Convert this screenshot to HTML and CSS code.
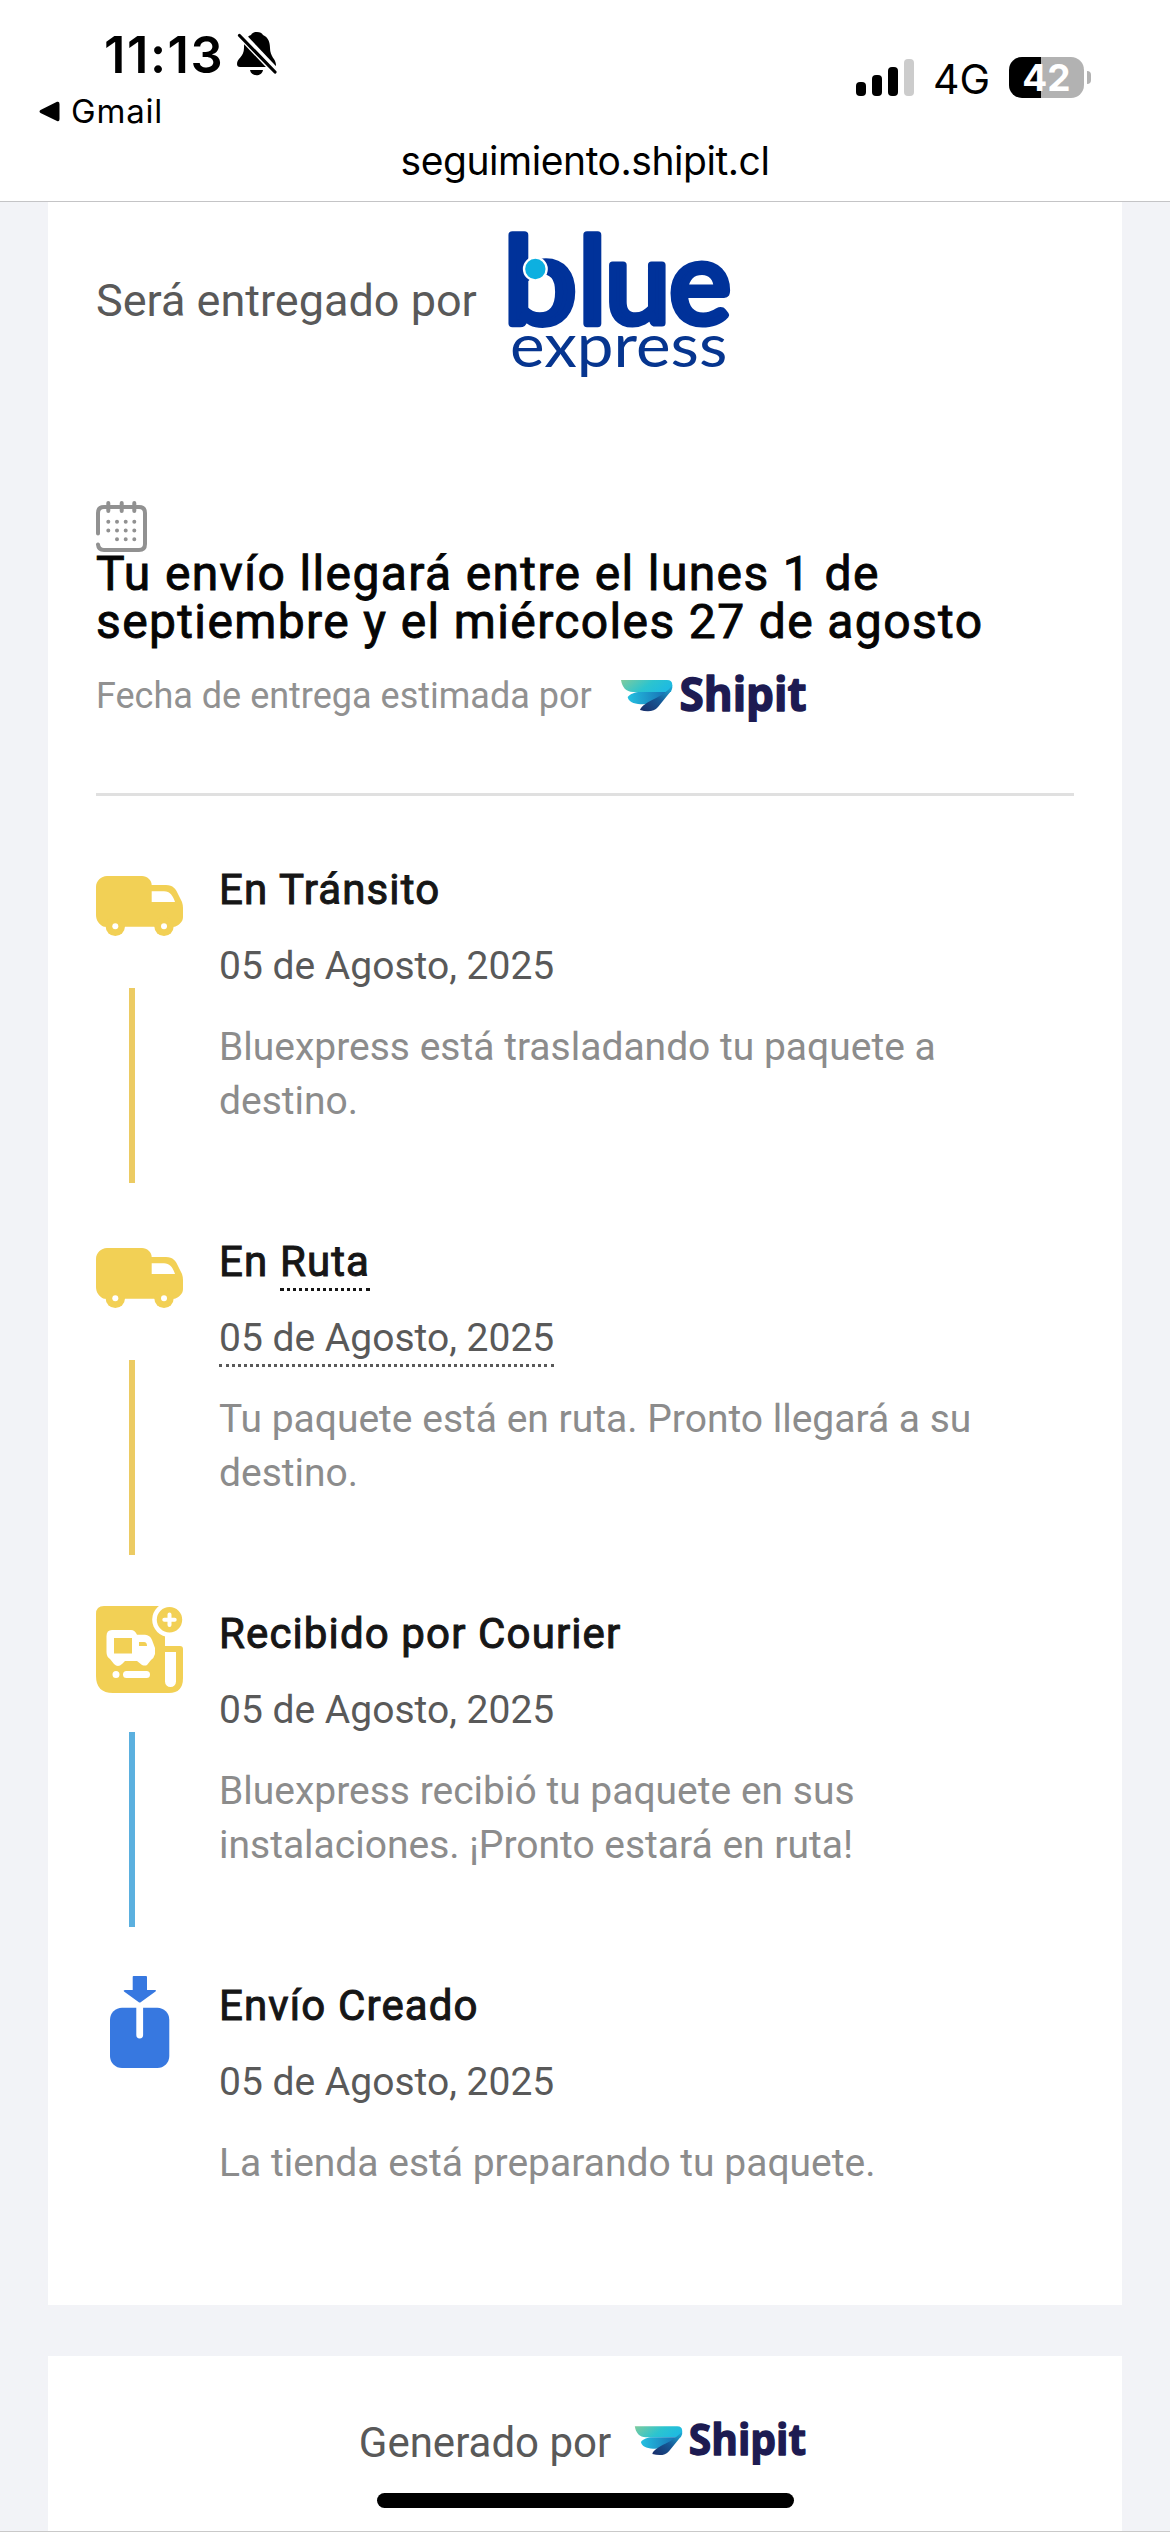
FILE: index.html
```html
<!DOCTYPE html>
<html lang="es">
<head>
<meta charset="utf-8">
<title>Seguimiento Shipit</title>
<link rel="stylesheet" href="styles.css">
</head>
<body>
<svg class="defs" aria-hidden="true">
  <defs>
    <linearGradient id="wingTop" x1="0" x2="1" y1="0" y2=".3"><stop offset="0" stop-color="#7fcb9d"/><stop offset=".6" stop-color="#2cc4cf"/><stop offset="1" stop-color="#1fbbe0"/></linearGradient>
    <linearGradient id="wingMid" x1="0" x2="1"><stop offset="0" stop-color="#24c0e0"/><stop offset="1" stop-color="#1668b0"/></linearGradient>
    <linearGradient id="wingLow" x1="0" x2="1" y1="1" y2="0"><stop offset="0" stop-color="#1a2c68"/><stop offset=".5" stop-color="#155896"/><stop offset="1" stop-color="#1fb4dc"/></linearGradient>
    <symbol id="shipit" viewBox="0 0 190 52">
      <path fill="url(#wingTop)" d="M0 10H46Q51.300 10 51.300 15L50 22H12C5 22 1 17 0 10Z"/>
      <path fill="url(#wingMid)" d="M19 22H49C41 28 34 36 17 34C10 33 7 30 6.700 27C9 24 14 22 19 22Z"/>
      <path fill="url(#wingLow)" d="M19 40C22 31 43 28 51.300 15Q52 18 50 21L37 37C33 42 26 42 19 40Z"/>
      <text class="shipit-word" x="58.500" y="41.300" textLength="127" lengthAdjust="spacingAndGlyphs">Shipit</text>
    </symbol>
    <symbol id="truck" viewBox="0 0 87 87">
      <path d="M11 14H46C51 14 55.700 18 55.700 23H70C77 23 80 27 82 32L86 40Q87 43 87 46V55C87 60 83 63 79 64.700H8C3 63 0 58 0 53V25C0 19 5 14 11 14Z"/>
      <circle cx="19.300" cy="64.300" r="9.700"/><circle cx="68" cy="64.300" r="9.700"/>
      <g fill="#fff"><circle cx="19.300" cy="64.300" r="3"/><circle cx="68" cy="64.300" r="3"/><path d="M55.700 29.300H68C74 29.300 77 34 79 40H55.700Z"/></g>
    </symbol>
  </defs>
</svg>

<header class="topbar">
  <div class="status">
    <div class="status-left">
      <div class="clock">11:13
        <svg width="40" height="44" viewBox="0 0 40 44"><path d="M20 0C23 0 25 1 26 3C31 5 33 10 33 16C33 25 39 27 39 33Q39 35 36 35H3Q0 35 0 32C0 26 7 25 7 16C7 9 9 5 14 3C15 1 17 0 20 0ZM13 38H26C25 45 14 45 13 38Z"/><path d="M2 1L41 42" stroke="#fff" stroke-width="8"/><path d="M2.500 3.500L38 40" stroke="#000" stroke-width="3.200" stroke-linecap="round"/></svg>
      </div>
      <div class="back"><svg width="21" height="21" viewBox="0 0 21 21"><path d="M1.500 9L18 .8Q20.500 0 20.500 3V18Q20.500 21 18 20L1.500 12Q-.5 10.500 1.500 9Z"/></svg>Gmail</div>
    </div>
    <div class="status-right">
      <div class="signal"><i></i><i></i><i></i><i class="off"></i></div>
      <span class="net">4G</span>
      <div class="battery"><span>42</span></div><i class="nub"></i>
    </div>
  </div>
  <div class="url">seguimiento.shipit.cl</div>
</header>

<main>
  <section class="card">
    <div class="courier">
      <span>Será entregado por</span>
      <svg width="280" height="180" viewBox="0 0 840 540">
        <g class="blue-word">
          <text transform="translate(70 339) scale(1.100 1)">b</text>
          <text x="295" y="339">l</text>
          <text transform="translate(375 339) scale(.98 .96)">u</text>
          <text transform="translate(568 339) scale(.98 .96)">e</text>
        </g>
        <circle cx="166" cy="177" r="34" fill="#0db0e0" stroke="#fff" stroke-width="7"/>
        <text class="express-word" x="90" y="471" textLength="652" lengthAdjust="spacingAndGlyphs">express</text>
      </svg>
    </div>
    <svg class="calendar" width="52" height="52" viewBox="0 0 52 52">
      <g fill="none" stroke="#919191" stroke-width="4" stroke-linecap="round"><path d="M2 32.500V12Q2 6 8 6H43Q49 6 49 12V43Q49 49 43 49H8Q2.500 49 2 43.500M12.300 2V10M25.700 2V10M38.300 2V10"/></g>
      <path d="M12.300 20.700h0M21 20.700h0M29.700 20.700h0M38.300 20.700h0M12.300 29.500h0M21 29.500h0M29.700 29.500h0M38.300 29.500h0M21 38.200h0M29.700 38.200h0M38.300 38.200h0" stroke="#919191" stroke-width="4" stroke-linecap="round"/>
    </svg>
    <h1>Tu envío llegará entre el lunes 1 de septiembre y el miércoles 27 de agosto</h1>
    <div class="estimate"><span>Fecha de entrega estimada por</span><svg width="190" height="52"><use href="#shipit"/></svg></div>
    <hr>

    <ol class="timeline">
      <li>
        <div class="rail yellow"><svg width="87" height="87"><use href="#truck"/></svg><i></i></div>
        <div class="event"><h2>En Tránsito</h2><time>05 de Agosto, 2025</time><p>Bluexpress está trasladando tu paquete a destino.</p></div>
      </li>
      <li>
        <div class="rail yellow"><svg width="87" height="87"><use href="#truck"/></svg><i></i></div>
        <div class="event"><h2>En <span class="dotted">Ruta</span></h2><time><span class="dotted">05 de Agosto, 2025</span></time><p>Tu paquete está en ruta. Pronto llegará a su destino.</p></div>
      </li>
      <li>
        <div class="rail yellow to-blue">
          <svg width="87" height="87" viewBox="0 0 87 87">
            <path d="M8 0H69V40H84Q87 40 87 43V72Q87 87 73 87H17Q0 87 0 70V8Q0 0 8 0Z"/>
            <circle cx="73.500" cy="13.700" r="17.300" fill="#fff"/><circle cx="73.500" cy="13.700" r="12.700"/>
            <path d="M73.500 8.500V19M68.300 13.700H78.700" stroke="#fff" stroke-width="4" stroke-linecap="round"/>
            <path fill="#fff" d="M69 46H80V75.500A5.500 5.500 0 0 1 69 75.500ZM16 24H35Q39 24 41 28.700H49Q54 29 56 34L59 42V48Q58 52 55 54L51 59Q49 60 46 59L41 55H29L26 58Q22 62 18 58L14 53Q10.500 51 10.500 46V30Q10.500 24 16 24Z"/>
            <path d="M18 32H36V47.500H18ZM43 36H48Q51 36 51 40H43Z"/>
            <path d="M20 68.500h0M30.500 68.500H50.500" stroke="#fff" stroke-width="7" stroke-linecap="round"/>
          </svg><i></i>
        </div>
        <div class="event"><h2>Recibido por Courier</h2><time>05 de Agosto, 2025</time><p>Bluexpress recibió tu paquete en sus instalaciones. ¡Pronto estará en ruta!</p></div>
      </li>
      <li>
        <div class="rail blue">
          <svg class="created" width="87" height="92" viewBox="0 0 87 92"><path d="M37.500 0H50Q51 0 51 1V14H59Q61 14 59.500 15.500L45 26Q43.700 27 42.500 26L28 15.500Q27 14 29 14H36.700V1Q36.700 0 37.500 0Z"/><rect x="14" y="31.700" width="59.300" height="60.300" rx="12"/><path d="M40.300 31V59A3.400 3.400 0 0 0 47.100 59V31Z" fill="#fff"/></svg>
        </div>
        <div class="event"><h2>Envío Creado</h2><time>05 de Agosto, 2025</time><p>La tienda está preparando tu paquete.</p></div>
      </li>
    </ol>
  </section>
  <footer class="card generated"><span>Generado por</span><svg width="177" height="48"><use href="#shipit"/></svg></footer>
</main>
<div class="home-indicator"></div>
</body>
</html>
```
FILE: styles.css
```css
* { box-sizing: border-box; }
html, body { margin: 0; height: 2532px; overflow: hidden; }
body { position: relative; background: #f2f3f7; font-family: Roboto, sans-serif; color: #595959; border-bottom: 1px solid #c9c9c9; }
svg { display: block; flex: none; }
.defs { position: absolute; width: 0; height: 0; }
h1, h2, p, ol { margin: 0; padding: 0; font-weight: 400; }

.topbar { height: 202px; background: #fff; border-bottom: 1px solid #c4c4c6; color: #000; font-family: Inter, "Liberation Sans", sans-serif; }
.status { display: flex; justify-content: space-between; height: 139px; padding: 24px 79px 0 39px; }
.clock { display: flex; align-items: center; gap: 13px; height: 60px; padding-left: 65px; font-size: 50.500px; font-weight: 600; letter-spacing: 1.600px; }
.back { display: flex; align-items: center; gap: 11px; height: 40px; margin-top: 7px; font-size: 33px; letter-spacing: .8px; }
.status-right { display: flex; align-items: center; height: 41px; margin-top: 33px; }
.signal { display: flex; align-items: flex-end; gap: 6px; height: 37px; margin-right: 19px; }
.signal i { width: 10px; height: 14px; border-radius: 4px; background: #000; }
.signal i:nth-child(2) { height: 21px; }
.signal i:nth-child(3) { height: 29px; }
.signal i.off { height: 37px; background: #ccc; }
.net { width: 76px; padding-top: 2px; font-size: 41px; }
.battery { width: 75px; height: 41px; border-radius: 13px; background: linear-gradient(90deg, #000 32px, #b2b2b2 32px); color: #fff; text-align: center; font-size: 37px; line-height: 41px; font-weight: 700; }
.nub { width: 4px; height: 13px; margin-left: 3px; border-radius: 0 6px 6px 0; background: #b2b2b2; }
.url { text-align: center; font-size: 39px; line-height: 44px; letter-spacing: -.45px; }

main { padding: 0 48px; }
.card { background: #fff; padding: 8px 48px 0; height: 2103px; }
.courier { display: flex; align-items: center; gap: 3px; font-size: 45px; }
.blue-word { font: 400 358px Lato, sans-serif; fill: #00329a; stroke: #00329a; stroke-width: 22px; stroke-linejoin: round; }
.express-word { font: 400 180px Lato, sans-serif; fill: #06358f; }
.calendar { margin: 111px 0 -3px; }
h1 { font-size: 48px; line-height: 48px; letter-spacing: 1.370px; color: #050505; -webkit-text-stroke: .9px #050505; }
.estimate { display: flex; align-items: center; gap: 29px; margin-top: 24px; font-size: 36px; color: #919191; }
.shipit-word { font: 700 46px "Open Sans", sans-serif; fill: #1d1b52; stroke: #1d1b52; stroke-width: 1.500px; stroke-linejoin: round; }
hr { height: 3px; margin: 71px 0 66px; border: 0; background: #e0e0e0; }

.timeline { list-style: none; }
.timeline li { display: flex; height: 372px; }
.rail { width: 123px; flex: none; }
.rail i { display: block; width: 6px; height: 195px; margin: 39px 0 0 33px; background: #eccb63; }
.yellow { fill: #f2d055; }
.to-blue i { background: #5bb0df; }
.blue { fill: #3778e0; }
.created { margin-top: -2px; }
.event { padding-top: 4px; }
h2 { font-size: 42px; line-height: 48px; letter-spacing: 1.130px; color: #161616; -webkit-text-stroke: 1px #161616; }
time { display: block; margin-top: 25px; font-size: 39px; line-height: 54px; color: #595959; }
.event p { margin-top: 27px; font-size: 39px; line-height: 54px; color: #8c8c8c; }
.dotted { display: inline-block; height: 56px; margin-bottom: -2px; border-bottom: 3px dotted currentColor; }
h2 .dotted { height: 53px; margin-bottom: -5px; }

.generated { display: flex; justify-content: center; gap: 23px; height: 176px; margin-top: 51px; padding: 60px 0 0; font-size: 42px; line-height: 53px; }
.generated svg { margin-top: 1px; }
.home-indicator { position: absolute; left: 377px; top: 2493px; width: 417px; height: 15px; border-radius: 8px; background: #000; }
```
